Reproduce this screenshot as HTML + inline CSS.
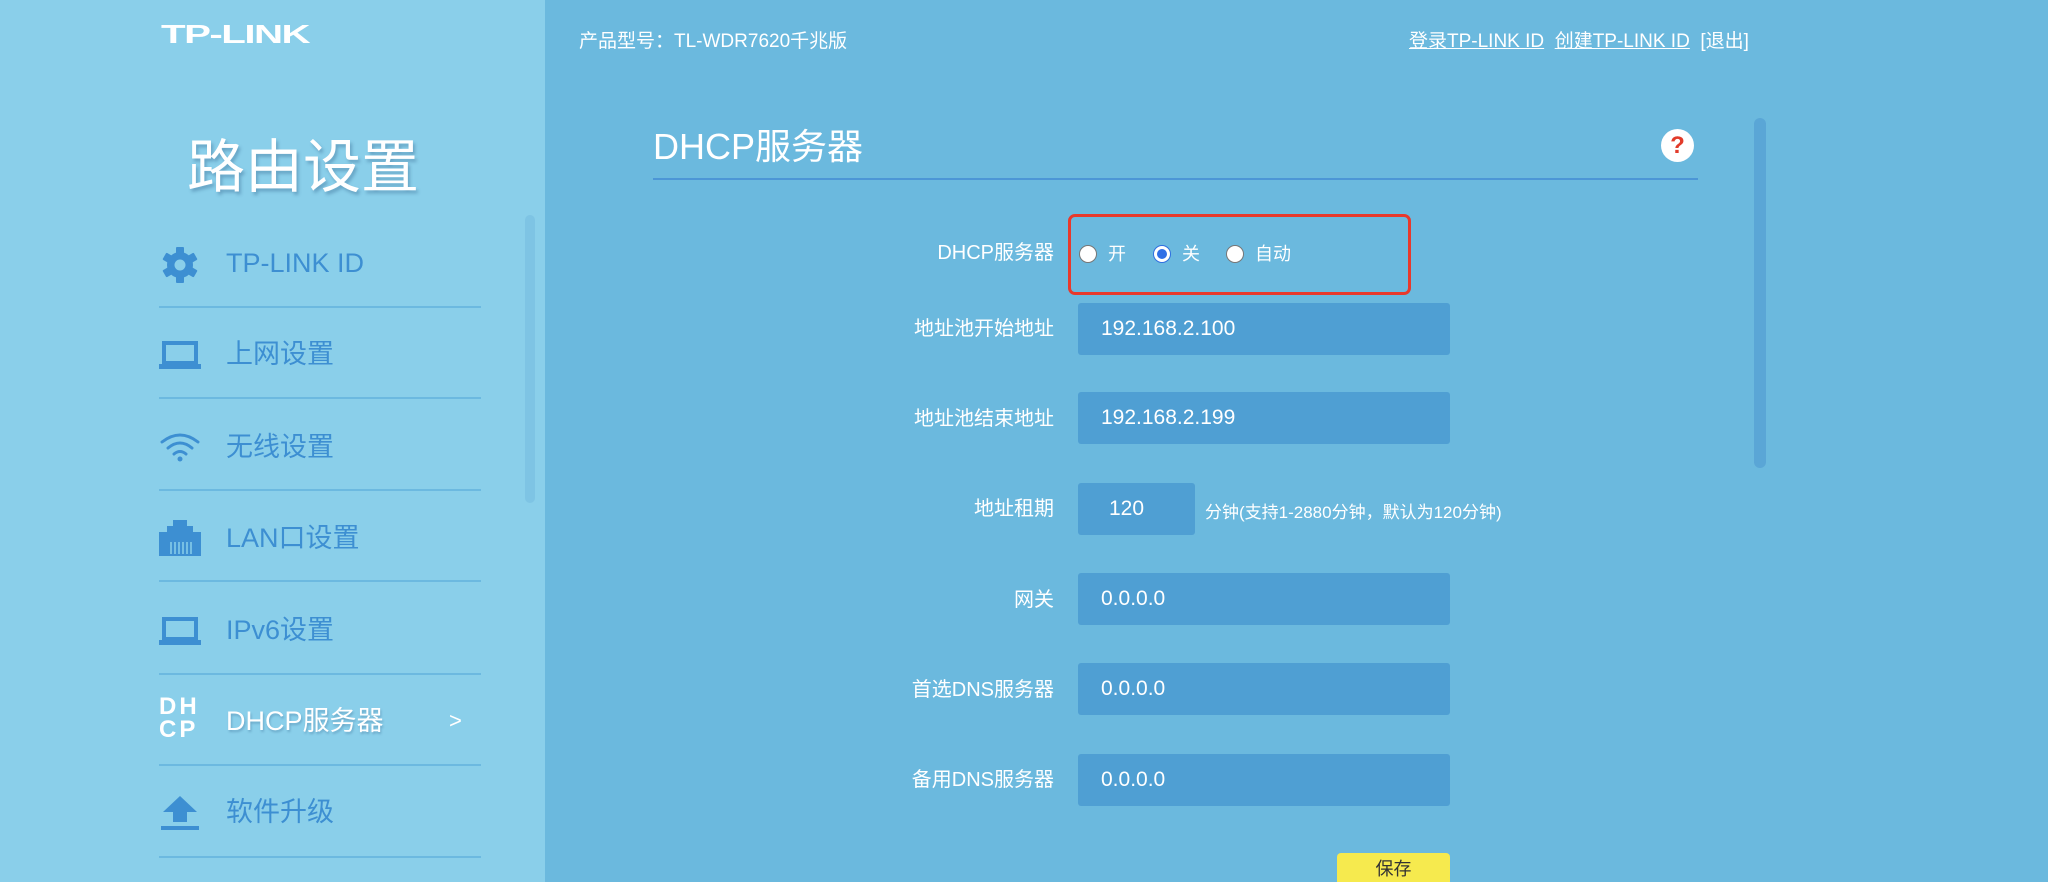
<!DOCTYPE html>
<html><head><meta charset="utf-8"><style>
*{margin:0;padding:0;box-sizing:border-box}
html,body{width:2048px;height:882px;overflow:hidden}
body{background:#6bb9de;font-family:"Liberation Sans","Noto Sans CJK SC",sans-serif;position:relative;color:#fff}
.side{position:absolute;left:0;top:0;width:545px;height:882px;background:#8acfea}
.abs{position:absolute;white-space:nowrap}
.logo{left:161px;top:19px;font-size:26px;font-weight:bold;letter-spacing:-1px;color:#fff;transform:scaleX(1.55);transform-origin:0 0}
.big{left:187px;top:120px;font-size:58px;text-shadow:2px 3px 3px rgba(60,110,150,.45)}
.sb{left:525px;top:215px;width:10px;height:288px;border-radius:5px;background:#7ec4e4}
.sep{position:absolute;left:159px;width:322px;height:2px;background:#6cb9e0}
.item{position:absolute;left:226px;font-size:27px;color:#3d8fd2;line-height:34px}
.ico{position:absolute;left:159px}
.lbl{position:absolute;right:994px;font-size:20px;line-height:26px;text-align:right}
.inp{position:absolute;left:1078px;width:372px;height:52px;background:#4f9fd3;border-radius:3px;font-size:21px;line-height:52px;padding-left:23px}
a{color:#fff}
</style></head><body>
<div class="side"></div>
<div class="abs logo">TP-LINK</div>
<div class="abs big">路由设置</div>
<div class="abs sb"></div>

<svg class="ico" style="top:245px" width="42" height="40" viewBox="0 0 42 40"><g fill="#3d8fd2"><circle cx="21" cy="20" r="13"/><g><rect x="17" y="2" width="8" height="36" rx="1"/><rect x="17" y="2" width="8" height="36" rx="1" transform="rotate(60 21 20)"/><rect x="17" y="2" width="8" height="36" rx="1" transform="rotate(120 21 20)"/></g></g><circle cx="21" cy="20" r="5.5" fill="#8acfea"/></svg>
<div class="item" style="top:246px">TP-LINK ID</div>
<div class="sep" style="top:306px"></div>

<svg class="ico" style="top:340px" width="42" height="30" viewBox="0 0 42 30"><rect x="5" y="3" width="32" height="20" fill="none" stroke="#3d8fd2" stroke-width="4"/><rect x="0" y="24" width="42" height="5" fill="#3d8fd2"/></svg>
<div class="item" style="top:337px">上网设置</div>
<div class="sep" style="top:397px"></div>

<svg class="ico" style="top:430px" width="42" height="32" viewBox="0 0 42 32"><g fill="none" stroke="#3d8fd2" stroke-width="3" stroke-linecap="round"><path d="M3 12 Q21 -2 39 12"/><path d="M9 18 Q21 8 33 18"/><path d="M15 24 Q21 19 27 24"/></g><circle cx="21" cy="29" r="2.5" fill="#3d8fd2"/></svg>
<div class="item" style="top:430px">无线设置</div>
<div class="sep" style="top:489px"></div>

<svg class="ico" style="top:520px" width="42" height="36" viewBox="0 0 42 36"><path d="M14 0h14v6h6v6h8v24H0V12h8V6h6z" fill="#3d8fd2"/><g stroke="#8acfea" stroke-width="1.5"><path d="M12 22v12M16 22v12M20 22v12M24 22v12M28 22v12M32 22v12"/></g></svg>
<div class="item" style="top:521px">LAN口设置</div>
<div class="sep" style="top:580px"></div>

<svg class="ico" style="top:616px" width="42" height="30" viewBox="0 0 42 30"><rect x="5" y="3" width="32" height="20" fill="none" stroke="#3d8fd2" stroke-width="4"/><rect x="0" y="24" width="42" height="5" fill="#3d8fd2"/></svg>
<div class="item" style="top:613px">IPv6设置</div>
<div class="sep" style="top:673px"></div>

<div class="abs" style="left:159px;top:695px;font-size:24px;font-weight:bold;line-height:23px;letter-spacing:3px;font-family:'Liberation Sans',sans-serif">DH<br>CP</div>
<div class="item" style="top:704px;color:#fff;text-shadow:1px 2px 2px rgba(60,110,150,.4)">DHCP服务器</div>
<div class="abs" style="left:449px;top:708px;font-size:22px;color:#fff">&gt;</div>
<div class="sep" style="top:764px"></div>

<svg class="ico" style="top:795px" width="42" height="36" viewBox="0 0 42 36"><path d="M21 1 L38 17 H28 V27 H14 V17 H4 Z" fill="#3d8fd2"/><rect x="2" y="31" width="38" height="4" fill="#3d8fd2"/></svg>
<div class="item" style="top:795px">软件升级</div>
<div class="sep" style="top:856px"></div>

<div class="abs" style="left:579px;top:26px;font-size:19px">产品型号：TL-WDR7620千兆版</div>
<div class="abs" style="left:1409px;top:26px;font-size:19px"><a style="text-decoration:underline">登录TP-LINK ID</a>&nbsp;&nbsp;<a style="text-decoration:underline">创建TP-LINK ID</a>&nbsp;&nbsp;[退出]</div>

<div class="abs" style="left:653px;top:118px;font-size:36px">DHCP服务器</div>
<div class="abs" style="left:653px;top:178px;width:1045px;height:2px;background:#4c96d6"></div>
<div class="abs" style="left:1661px;top:129px;width:33px;height:33px;border-radius:50%;background:#fff;color:#e23b2a;font-size:24px;font-weight:bold;text-align:center;line-height:33px">?</div>
<div class="abs" style="left:1754px;top:118px;width:12px;height:350px;border-radius:6px;background:#5aa6d6"></div>

<div class="abs" style="left:1068px;top:214px;width:343px;height:81px;border:3px solid #e8392c;border-radius:7px"></div>
<div class="lbl" style="top:240px">DHCP服务器</div>
<div class="abs" style="left:1079px;top:245px;width:18px;height:18px;border-radius:50%;background:#fff;border:1px solid #777"></div>
<div class="abs" style="left:1108px;top:240px;font-size:18px">开</div>
<div class="abs" style="left:1153px;top:245px;width:18px;height:18px;border-radius:50%;background:#fff;border:1px solid #2f6fe0"><div style="margin:3px;width:10px;height:10px;border-radius:50%;background:#2f6fe6"></div></div>
<div class="abs" style="left:1182px;top:240px;font-size:18px">关</div>
<div class="abs" style="left:1226px;top:245px;width:18px;height:18px;border-radius:50%;background:#fff;border:1px solid #777"></div>
<div class="abs" style="left:1255px;top:240px;font-size:18px">自动</div>

<div class="lbl" style="top:316px">地址池开始地址</div>
<div class="inp" style="top:303px">192.168.2.100</div>
<div class="lbl" style="top:406px">地址池结束地址</div>
<div class="inp" style="top:392px">192.168.2.199</div>
<div class="lbl" style="top:496px">地址租期</div>
<div class="inp" style="top:483px;width:117px;padding-left:31px">120</div>
<div class="abs" style="left:1205px;top:498px;font-size:17px">分钟(支持1-2880分钟，默认为120分钟)</div>
<div class="lbl" style="top:587px">网关</div>
<div class="inp" style="top:573px">0.0.0.0</div>
<div class="lbl" style="top:677px">首选DNS服务器</div>
<div class="inp" style="top:663px">0.0.0.0</div>
<div class="lbl" style="top:767px">备用DNS服务器</div>
<div class="inp" style="top:754px">0.0.0.0</div>

<div class="abs" style="left:1337px;top:853px;width:113px;height:29px;background:#f6ea4e;border-radius:4px 4px 0 0;color:#333;font-size:18px;text-align:center;line-height:32px;overflow:hidden">保存</div>
</body></html>
